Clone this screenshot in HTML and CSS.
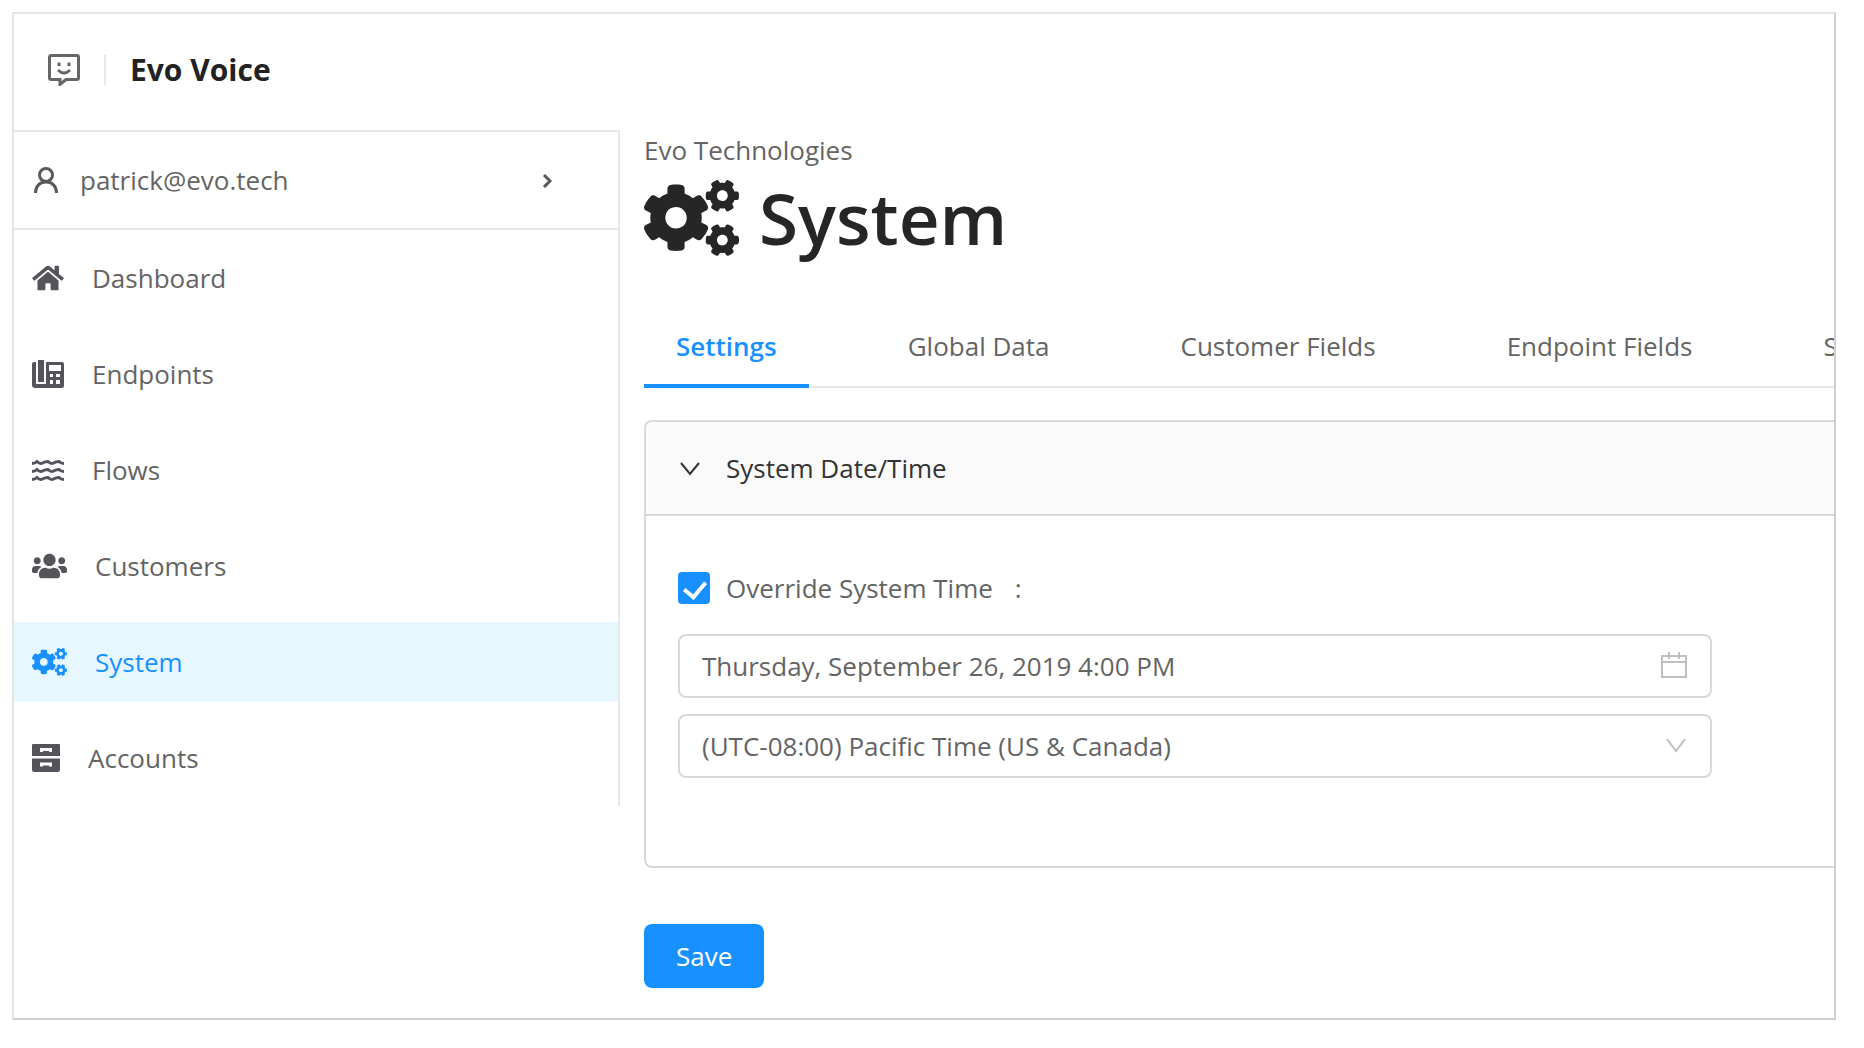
FILE: index.html
```html
<!DOCTYPE html>
<html lang="en">
<head>
    <meta charset="UTF-8">
    <meta name="viewport" content="width=device-width, initial-scale=1.0">
    <title>Evo Voice</title>
    <link rel="stylesheet" href="styles.css">
</head>
<body>
<!-- shared icons -->
<svg class="sprite" aria-hidden="true">
    <symbol id="cogs" viewBox="0 0 640 512">
        <path id="smallCog" fill-rule="evenodd" d="M512.1 191l-8.2 14.3c-3 5.3-9.4 7.5-15.1 5.4-11.8-4.4-22.6-10.7-32.1-18.6-4.6-3.8-5.8-10.5-2.8-15.7l8.2-14.3c-6.9-8-12.3-17.3-15.9-27.4h-16.5c-6 0-11.2-4.3-12.2-10.3-2-12-2.1-24.6 0-37.1 1-6 6.2-10.4 12.2-10.4h16.5c3.6-10.1 9-19.4 15.9-27.4l-8.2-14.3c-3-5.2-1.9-11.9 2.8-15.7 9.5-7.9 20.4-14.2 32.1-18.6 5.7-2.1 12.1.1 15.1 5.4l8.2 14.3c10.5-1.9 21.2-1.9 31.7 0L552 6.3c3-5.3 9.4-7.5 15.1-5.4 11.8 4.4 22.6 10.7 32.1 18.6 4.6 3.8 5.8 10.5 2.8 15.7l-8.2 14.3c6.9 8 12.3 17.3 15.9 27.4h16.5c6 0 11.2 4.3 12.2 10.3 2 12 2.1 24.6 0 37.1-1 6-6.2 10.4-12.2 10.4h-16.5c-3.6 10.1-9 19.4-15.9 27.4l8.2 14.3c3 5.2 1.9 11.9-2.8 15.7-9.5 7.9-20.4 14.2-32.1 18.6-5.7 2.1-12.1-.1-15.1-5.4l-8.2-14.3c-10.4 1.9-21.2 1.9-31.7 0zm-10.5-58.8c38.5 29.6 82.4-14.3 52.8-52.8-38.5-29.7-82.4 14.3-52.8 52.8z"/>
        <use href="#smallCog" y="299"/>
        <path fill-rule="evenodd" d="M386.3 286.1l33.7 16.8c10.1 5.8 14.5 18.1 10.5 29.1-8.9 24.2-26.4 46.4-42.6 65.8-7.4 8.9-20.2 11.1-30.3 5.3l-29.1-16.8c-16 13.7-34.6 24.6-54.9 31.7v33.6c0 11.6-8.3 21.6-19.7 23.6-24.6 4.2-50.4 4.4-75.9 0-11.5-2-20-11.9-20-23.6V418c-20.3-7.2-38.9-18-54.9-31.7L74 403c-10 5.8-22.9 3.6-30.3-5.3-16.2-19.4-33.3-41.6-42.2-65.7-4-10.9.4-23.2 10.5-29.1l33.3-16.8c-3.9-20.9-3.9-42.4 0-63.4L12 205.8c-10.1-5.8-14.6-18.1-10.5-29 8.9-24.2 26-46.4 42.2-65.8 7.4-8.9 20.2-11.1 30.3-5.3l29.1 16.8c16-13.7 34.6-24.6 54.9-31.7V57.1c0-11.5 8.2-21.5 19.6-23.5 24.6-4.2 50.5-4.4 76-.1 11.5 2 20 11.9 20 23.6v33.6c20.3 7.2 38.9 18 54.9 31.7l29.1-16.8c10-5.8 22.9-3.6 30.3 5.3 16.2 19.4 33.2 41.6 42.1 65.8 4 10.9.1 23.2-10 29.1l-33.7 16.8c3.9 21 3.9 42.5 0 63.5zm-117.6 21.1c59.2-77-28.7-164.9-105.7-105.7-59.2 77 28.7 164.9 105.7 105.7z"/>
    </symbol>
</svg>

<div class="window">
    <header class="topbar">
        <svg class="logo" viewBox="0 0 32 32">
            <path d="M3 1.5h26a1.500 1.500 0 0 1 1.500 1.500v21a1.500 1.500 0 0 1-1.500 1.500H18l-6 5v-5H3A1.500 1.500 0 0 1 1.500 24V3A1.500 1.500 0 0 1 3 1.500z"/>
            <path d="M11 8.500v3.500M21 8.500v3.500M10 16q6 6 12 0"/>
        </svg>
        <span class="brand">Evo Voice</span>
    </header>

    <div class="layout">
        <nav class="sidebar">
            <a class="account" href="#">
                <svg class="user-icon" viewBox="0 0 26 28">
                    <circle cx="12" cy="9" r="6.500"/>
                    <path d="M1.500 27c0-7 4.500-11 10.500-11s10.500 4 10.500 11"/>
                </svg>
                <span>patrick@evo.tech</span>
                <svg class="chevron" viewBox="0 0 12 16"><path d="M2 3l6 6-6 6"/></svg>
            </a>
            <ul class="menu">
                <li><a href="#">
                    <svg class="icon-home" viewBox="0 0 576 512"><path d="M280.37 148.26L96 300.11V464a16 16 0 0 0 16 16l112.06-.29a16 16 0 0 0 15.92-16V368a16 16 0 0 1 16-16h64a16 16 0 0 1 16 16v95.64a16 16 0 0 0 16 16.05L464 480a16 16 0 0 0 16-16V300L295.67 148.26a12.19 12.19 0 0 0-15.3 0zM571.6 251.47L488 182.56V44.05a12 12 0 0 0-12-12h-56a12 12 0 0 0-12 12v72.61L318.47 43a48 48 0 0 0-61 0L4.34 251.47a12 12 0 0 0-1.6 16.9l25.5 31A12 12 0 0 0 45.15 301l235.22-193.74a12.19 12.19 0 0 1 15.3 0L530.9 301a12 12 0 0 0 16.9-1.6l25.5-31a12 12 0 0 0-1.7-16.93z"/></svg>
                    Dashboard
                </a></li>
                <li><a href="#">
                    <svg viewBox="0 0 32 28"><path fill-rule="evenodd" d="M6 0h6v22H6zM2 2h2v22h10V2h16a2 2 0 0 1 2 2v22a2 2 0 0 1-2 2H3a3 3 0 0 1-3-3V4a2 2 0 0 1 2-2zM17 5v6h12V5zM18 14v3h3v-3zM24 14v3h4v-3zM18 20v4h3v-4zM24 20v4h4v-4z"/></svg>
                    Endpoints
                </a></li>
                <li><a href="#">
                    <svg class="waves" viewBox="0 0 32 28"><path d="M0 7.500q3 0 5-2 3 3 5.500 1.500T16 5.500q3 3 5.500 1.500T27 5.500q2 2 5 2M0 15.500q3 0 5-2 3 3 5.500 1.500t5.500-1.500q3 3 5.500 1.500t5.500-1.500q2 2 5 2M0 23.500q3 0 5-2 3 3 5.500 1.500t5.500-1.500q3 3 5.500 1.500t5.500-1.500q2 2 5 2"/></svg>
                    Flows
                </a></li>
                <li><a href="#">
                    <svg class="wide" viewBox="0 0 640 512"><path d="M96 224c35.3 0 64-28.7 64-64s-28.7-64-64-64-64 28.7-64 64 28.7 64 64 64zm448 0c35.3 0 64-28.7 64-64s-28.7-64-64-64-64 28.7-64 64 28.7 64 64 64zm32 32h-64c-17.6 0-33.5 7.1-45.1 18.6 40.3 22.1 68.9 62 75.1 109.4h66c17.700 0 32-14.300 32-32v-32c0-35.300-28.700-64-64-64zm-256 0c61.900 0 112-50.100 112-112S381.900 32 320 32 208 82.100 208 144s50.100 112 112 112zm76.800 32h-8.300c-20.800 10-43.900 16-68.500 16s-47.600-6-68.500-16h-8.300C179.600 288 128 339.600 128 403.200V432c0 26.500 21.500 48 48 48h288c26.500 0 48-21.500 48-48v-28.800c0-63.600-51.600-115.200-115.200-115.200zm-223.700-13.400C161.500 263.100 145.600 256 128 256H64c-35.300 0-64 28.700-64 64v32c0 17.700 14.300 32 32 32h65.900c6.300-47.400 34.900-87.300 75.200-109.400z"/></svg>
                    Customers
                </a></li>
                <li><a class="selected" href="#">
                    <svg class="wide"><use href="#cogs"/></svg>
                    System
                </a></li>
                <li><a href="#">
                    <svg class="narrow" viewBox="0 0 28 28"><path fill-rule="evenodd" d="M1 0h26a1 1 0 0 1 1 1v11H0V1a1 1 0 0 1 1-1zM8 4v4h3V7h6v1h3V4zM0 14.500h28V26a2 2 0 0 1-2 2H2a2 2 0 0 1-2-2zM8 18.500v4h3v-1h6v1h3v-4z"/></svg>
                    Accounts
                </a></li>
            </ul>
        </nav>

        <main class="content">
            <p class="org">Evo Technologies</p>
            <h1><svg><use href="#cogs"/></svg>System</h1>

            <div class="tabs">
                <a class="active" href="#">Settings</a>
                <a href="#">Global Data</a>
                <a href="#">Customer Fields</a>
                <a href="#">Endpoint Fields</a>
                <a href="#">S</a>
            </div>

            <section class="panel">
                <button class="panel-header" type="button" aria-expanded="true">
                    <svg class="arrow" viewBox="0 0 20 16"><path d="M1 3l9 11 9-11"/></svg>
                    System Date/Time
                </button>
                <div class="panel-body">
                    <label class="check">
                        <input type="checkbox" checked>
                        <span>Override System Time</span>
                        <span class="colon">:</span>
                    </label>
                    <div class="field">
                        <input type="text" aria-label="System time" value="Thursday, September 26, 2019 4:00 PM">
                        <svg class="calendar" viewBox="0 0 26 28"><path d="M1 5h24v21H1zM1 11h24M8 1v7M18 1v7"/></svg>
                    </div>
                    <div class="field">
                        <select aria-label="Time zone">
                            <option>(UTC-08:00) Pacific Time (US &amp; Canada)</option>
                        </select>
                        <svg class="arrow" viewBox="0 0 20 16"><path d="M1 1l9 12 9-12"/></svg>
                    </div>
                </div>
            </section>

            <button class="save" type="submit">Save</button>
        </main>
    </div>
</div>
</body>
</html>
```

FILE: styles.css
```css
* {
    box-sizing: border-box;
}
body {
    margin: 12px 28px 28px 12px;
    background: #fff;
    color: #646464;
    font-family: "Open Sans", "Noto Sans", sans-serif;
    font-size: 26px;
    line-height: 40px;
}
a {
    color: inherit;
    text-decoration: none;
}
svg {
    flex: none;
    fill: currentColor;
}
.sprite {
    display: none;
}
.window {
    border: 2px solid #e4e4e4;
    border-right-color: #d0d0d0;
    border-bottom-color: #d0d0d0;
    background: #fff;
    box-shadow: 8px 8px 16px rgba(50, 30, 40, 0.2);
    overflow: hidden;
}

/* top bar */
.topbar {
    display: flex;
    align-items: center;
    height: 116px;
    padding: 0 34px 4px;
}
.logo {
    width: 32px;
    height: 32px;
    fill: none;
    stroke: #686468;
    stroke-width: 3;
}
.brand {
    margin-left: 24px;
    padding-left: 24px;
    border-left: 2px solid #e8e8e8;
    color: #222;
    font-size: 30px;
    font-weight: 700;
    line-height: 30px;
}
.layout {
    display: flex;
    align-items: flex-start;
}

/* sidebar */
.sidebar {
    flex: none;
    width: 606px;
    border-top: 2px solid #e8e8e8;
    border-right: 2px solid #e8e8e8;
}
.account {
    display: flex;
    align-items: center;
    height: 98px;
    padding: 0 64px 0 20px;
    border-bottom: 2px solid #e8e8e8;
}
.account svg {
    fill: none;
    stroke: #595959;
    stroke-width: 3;
}
.user-icon {
    width: 26px;
    height: 28px;
    margin-right: 20px;
}
.chevron {
    width: 12px;
    height: 16px;
    margin-left: auto;
}
.menu {
    margin: 0;
    padding: 8px 0;
    list-style: none;
}
.menu li + li {
    margin-top: 16px;
}
.menu a {
    display: flex;
    align-items: center;
    gap: 28px;
    height: 80px;
    padding-left: 18px;
}
.menu svg {
    width: 32px;
    height: 28px;
    color: #54545a;
}
.menu .wide {
    width: 35px;
}
.menu .narrow {
    width: 28px;
}
.menu .waves {
    fill: none;
    stroke: currentColor;
    stroke-width: 3;
}
.menu .selected {
    background: #e6f7ff;
}
.menu .selected,
.menu .selected svg {
    color: #1890ff;
}

/* content */
.content {
    flex: 1;
    min-width: 0;
    padding: 0 0 30px 24px;
}
.org {
    margin: 0;
}
h1 {
    display: flex;
    align-items: center;
    gap: 20px;
    margin: 0;
    height: 96px;
    color: #262626;
    font-size: 71px;
    font-weight: 600;
}
h1 svg {
    width: 95px;
    height: 76px;
}
.tabs {
    display: flex;
    gap: 67px;
    margin: 40px 0 32px;
    border-bottom: 2px solid #e8e8e8;
    white-space: nowrap;
}
.tabs a {
    padding: 20px 32px 18px;
    margin-bottom: -2px;
    border-bottom: 4px solid transparent;
}
.tabs .active {
    border-color: #1890ff;
    color: #1890ff;
    font-weight: 600;
}
.panel {
    border: 2px solid #d9d9d9;
    border-right: none;
    border-radius: 8px 0 0 8px;
    overflow: hidden;
}
.panel-header {
    display: flex;
    align-items: center;
    gap: 26px;
    width: 100%;
    height: 94px;
    padding: 0 34px;
    border: none;
    border-bottom: 2px solid #d9d9d9;
    background: #fafafa;
    color: #333;
    font: inherit;
}
.arrow {
    width: 20px;
    height: 16px;
    fill: none;
    stroke: currentColor;
    stroke-width: 2;
}
.panel-body {
    padding: 52px 32px 88px;
}
.check {
    display: flex;
    align-items: center;
    margin-bottom: 26px;
}
.check input {
    appearance: none;
    width: 32px;
    height: 32px;
    margin: 0 16px 0 0;
    border-radius: 4px;
    background: #1890ff;
}
.check input:checked::before {
    content: "";
    display: block;
    width: 10px;
    height: 17px;
    margin: 5px 0 0 10px;
    border: solid #fff;
    border-width: 0 4px 4px 0;
    transform: rotate(40deg);
}
.colon {
    margin-left: 22px;
}
.field {
    position: relative;
    max-width: 1034px;
}
.field + .field {
    margin-top: 16px;
}
.field input,
.field select {
    appearance: none;
    display: block;
    width: 100%;
    height: 64px;
    padding: 0 64px 0 22px;
    border: 2px solid #d9d9d9;
    border-radius: 8px;
    background: #fff;
    color: inherit;
    font: inherit;
}
.field svg {
    position: absolute;
    top: 24px;
    right: 26px;
    color: #bfbfbf;
    pointer-events: none;
}
.field .calendar {
    top: 17px;
    right: 25px;
    width: 26px;
    height: 28px;
    fill: none;
    stroke: currentColor;
    stroke-width: 2;
}
.save {
    display: block;
    height: 64px;
    margin-top: 56px;
    padding: 0 32px;
    border: none;
    border-radius: 8px;
    background: #1890ff;
    color: #fff;
    font: inherit;
}
```
